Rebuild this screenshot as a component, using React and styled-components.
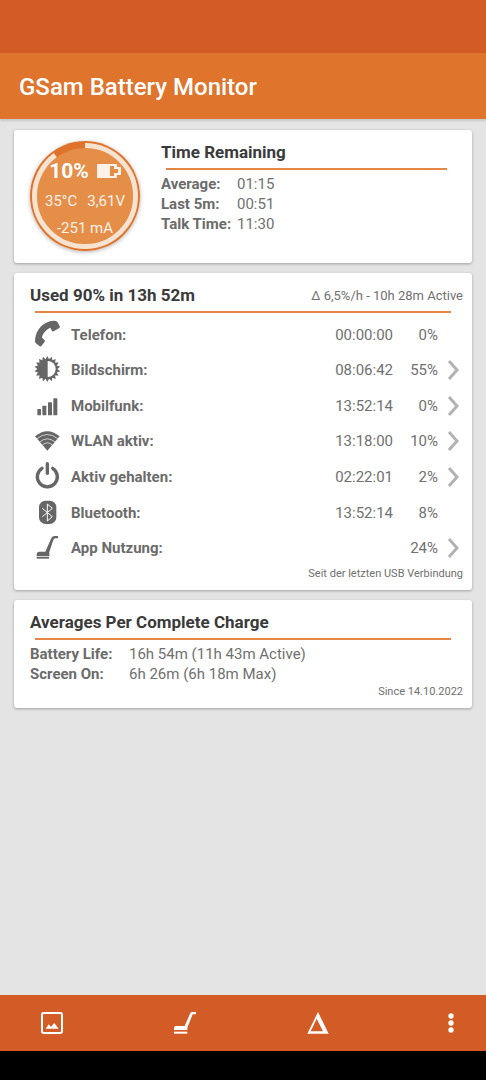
import React from "react";
import styled, { createGlobalStyle } from "styled-components";

const PhoneIcon = () => (
  <Icon viewBox="0 0 84 84">
    <path d="M51 1C24 8 7 32 6 60Q6 65 9 67L20 76Q23 77 25 75L35 62Q37 59 34 56L27 50C28 38 40 25 52 20L57 30Q59 32 62 31L79 21Q82 19 80 16L74 4Q72 1 68 0Q60-2 51 1Z" />
  </Icon>
);

const teeth = Array.from({ length: 36 }, (_, i) => {
  const r = i % 2 ? 30 : 39;
  const a = (i * Math.PI) / 18;
  return `${(43 + r * Math.sin(a)).toFixed(1)},${(39 - r * Math.cos(a)).toFixed(1)}`;
}).join(" ");

const ScreenIcon = () => (
  <Icon viewBox="0 0 84 84">
    <polygon points={teeth} />
    <path d="M44 15a24 24 0 0 1 0 48z" fill="#fff" />
  </Icon>
);

const SignalIcon = () => (
  <Icon viewBox="0 0 84 84">
    <rect x="13" y="51" width="11" height="19" rx="2" />
    <rect x="28" y="41" width="12" height="29" rx="2" />
    <rect x="45" y="31" width="12" height="39" rx="2" />
    <rect x="61" y="19" width="12" height="51" rx="2" />
  </Icon>
);

const WifiIcon = () => (
  <Icon viewBox="0 0 84 84">
    <path d="M6 28Q43-3 80 28L43 71Z" />
    <g fill="none" stroke="#fff" strokeWidth="2">
      <path d="M12 35Q43 10 74 35" />
      <path d="M20 45Q43 26 66 45" />
      <path d="M28 54Q43 41 58 54" />
    </g>
  </Icon>
);

const PowerIcon = () => (
  <Icon viewBox="0 0 84 84">
    <g fill="none" stroke="#666" strokeWidth="10" strokeLinecap="round">
      <path d="M27 16A30 30 0 1 0 59 16" />
      <path d="M43 2V31" />
    </g>
  </Icon>
);

const BluetoothIcon = () => (
  <Icon viewBox="0 0 84 84">
    <rect x="18" y="5" width="52" height="70" rx="20" />
    <path
      d="M28 28L58 53L43 66V15L58 28L28 53"
      fill="none"
      stroke="#fff"
      strokeWidth="3"
    />
  </Icon>
);

const SweepIcon = () => (
  <Icon viewBox="0 0 84 84">
    <path d="M11 67V62Q11 53 20 53H37L54 14Q57 6 64 6H75V13H67Q63 13 61 18L49 54V67Z" />
    <rect x="11" y="69" width="37" height="5" />
  </Icon>
);

const usage = [
  { name: "Telefon", time: "00:00:00", percent: "0%", icon: PhoneIcon },
  { name: "Bildschirm", time: "08:06:42", percent: "55%", icon: ScreenIcon, more: true },
  { name: "Mobilfunk", time: "13:52:14", percent: "0%", icon: SignalIcon, more: true },
  { name: "WLAN aktiv", time: "13:18:00", percent: "10%", icon: WifiIcon, more: true },
  { name: "Aktiv gehalten", time: "02:22:01", percent: "2%", icon: PowerIcon, more: true },
  { name: "Bluetooth", time: "13:52:14", percent: "8%", icon: BluetoothIcon },
  { name: "App Nutzung", time: "", percent: "24%", icon: SweepIcon, more: true },
];

const remaining = [
  ["Average:", "01:15"],
  ["Last 5m:", "00:51"],
  ["Talk Time:", "11:30"],
];

const averages = [
  ["Battery Life:", "16h 54m (11h 43m Active)"],
  ["Screen On:", "6h 26m (6h 18m Max)"],
];

const Facts = ({ rows, labelWidth }) => (
  <FactTable $label={labelWidth}>
    <tbody>
      {rows.map(([label, value]) => (
        <tr key={label}>
          <th scope="row">{label}</th>
          <td>{value}</td>
        </tr>
      ))}
    </tbody>
  </FactTable>
);

const BatteryGauge = () => (
  <Gauge>
    <svg viewBox="0 0 110 110" aria-hidden="true">
      <circle cx="55" cy="55" r="55" fill="#df732b" />
      <circle cx="55" cy="55" r="48" fill="#e48e47" />
      {/* the charge already used, clockwise from the top */}
      <circle
        cx="55"
        cy="55"
        r="50.5"
        fill="none"
        stroke="#f8e3d1"
        strokeWidth="5"
        pathLength="100"
        strokeDasharray="90 10"
        transform="rotate(-90 55 55)"
      />
    </svg>
    <Reading>
      <GaugeLine $gap="8px">
        <Level>10%</Level>
        <svg width="24" height="14" viewBox="0 0 24 14" aria-hidden="true">
          <path d="M0 1Q0 0 1 0H20V3H24V11H20V14H1Q0 14 0 13Z" fill="#fdf1e8" />
          <path d="M13 2H17V5H21V9H17V12H13Z" fill="#e48e47" />
        </svg>
      </GaugeLine>
      <GaugeLine $gap="10px">
        <span>35°C</span>
        <span>3,61V</span>
      </GaugeLine>
      <GaugeLine>-251 mA</GaugeLine>
    </Reading>
  </Gauge>
);

const App = () => {
  return (
    <>
      <GlobalStyle />
      <Screen>
        <StatusBar />
        <AppBar>
          <h1>GSam Battery Monitor</h1>
        </AppBar>
        <Content>
          <Card>
            <Summary>
              <BatteryGauge />
              <SummaryText>
                <CardTitle>Time Remaining</CardTitle>
                <Rule $right="16px" />
                <Facts rows={remaining} labelWidth="76px" />
              </SummaryText>
            </Summary>
          </Card>

          <Card>
            <CardHead>
              <CardTitle>Used 90% in 13h 52m</CardTitle>
              <Rate>Δ 6,5%/h - 10h 28m Active</Rate>
            </CardHead>
            <Rule $right="12px" />
            <UsageTable>
              <tbody>
                {usage.map(({ name, time, percent, icon: RowIcon, more }) => (
                  <tr key={name}>
                    <IconCell>
                      <RowIcon />
                    </IconCell>
                    <th scope="row">{name}:</th>
                    <TimeCell>{time}</TimeCell>
                    <PercentCell>{percent}</PercentCell>
                    <MoreCell>
                      {more && (
                        <MoreButton type="button" aria-label={name}>
                          <svg width="12" height="22" viewBox="0 0 12 22">
                            <path d="M2 2L10 11L2 20" />
                          </svg>
                        </MoreButton>
                      )}
                    </MoreCell>
                  </tr>
                ))}
              </tbody>
            </UsageTable>
            <Footnote>Seit der letzten USB Verbindung</Footnote>
          </Card>

          <Card>
            <CardTitle>Averages Per Complete Charge</CardTitle>
            <Rule $right="12px" />
            <Facts rows={averages} labelWidth="99px" />
            <Footnote>Since 14.10.2022</Footnote>
          </Card>
        </Content>

        <BottomBar>
          <BarButton type="button" aria-label="Chart">
            <svg width="22" height="22" viewBox="0 0 66 66">
              <rect x="3" y="3" width="60" height="60" rx="5" fill="none" stroke="#fff" strokeWidth="6" />
              <path d="M14 50L23 37L30 44L40 33L53 50Z" fill="#fff" />
            </svg>
          </BarButton>
          <BarButton type="button" aria-label="App usage">
            <svg width="22" height="22" viewBox="0 0 66 66">
              <path d="M0 54V48Q0 42 6 42H32L49 3Q51 0 54 0H66V7H56L40 47V54Z" fill="#fff" />
              <rect y="59" width="40" height="6" fill="#fff" />
            </svg>
          </BarButton>
          <BarButton type="button" aria-label="Delta">
            <svg width="22" height="22" viewBox="0 0 66 66">
              <path d="M33 0L65 65H1ZM29 20L11 58H48Z" fill="#fff" fillRule="evenodd" />
            </svg>
          </BarButton>
          <BarButton type="button" aria-label="Menu">
            <svg width="22" height="22" viewBox="0 0 66 66" fill="#fff">
              <circle cx="33" cy="12" r="8" />
              <circle cx="33" cy="33" r="8" />
              <circle cx="33" cy="54" r="8" />
            </svg>
          </BarButton>
        </BottomBar>
        <NavArea />
      </Screen>
    </>
  );
};

export default App;

const GlobalStyle = createGlobalStyle`
  * {
    box-sizing: border-box;
  }
  body {
    margin: 0;
    background: #e4e4e4;
    color: #707070;
    font-family: Roboto, "Liberation Sans", sans-serif;
    font-size: 15px;
  }
  h1, h2, p {
    margin: 0;
  }
  table {
    border-collapse: collapse;
  }
  th, td {
    padding: 0;
    text-align: left;
  }
  th {
    color: #6b6b6b;
  }
  button {
    border: 0;
    padding: 0;
    background: none;
    cursor: pointer;
  }
`;

const Screen = styled.div`
  display: flex;
  flex-direction: column;
  min-height: 100vh;
`;

const StatusBar = styled.div`
  height: 53px;
  background: #d35b26;
`;

const AppBar = styled.header`
  display: flex;
  align-items: center;
  height: 66px;
  padding: 2px 19px 0;
  background: #df742c;
  box-shadow: 0 2px 2px rgba(0, 0, 0, 0.12);

  h1 {
    color: #fff;
    font-size: 24px;
    font-weight: 500;
  }
`;

const Content = styled.main`
  flex: 1;
  display: flex;
  flex-direction: column;
  gap: 10px;
  padding: 11px 14px 10px;
`;

const Card = styled.section`
  padding: 11px 9px 8px 16px;
  border-radius: 3px;
  background: #fff;
  box-shadow: 0 1px 3px rgba(0, 0, 0, 0.3);
`;

const CardHead = styled.div`
  display: flex;
  justify-content: space-between;
  align-items: center;
`;

const CardTitle = styled.h2`
  color: #3a3a3a;
  font-size: 17px;
  font-weight: 700;
  line-height: 22px;
`;

const Rate = styled.span`
  padding-top: 2px;
  font-size: 13px;
  line-height: 20px;
`;

const Rule = styled.div`
  height: 2px;
  margin: 5px ${(props) => props.$right} 4px 5px;
  background: #e58644;
`;

const Summary = styled.div`
  display: flex;
  gap: 21px;
`;

const SummaryText = styled.div`
  flex: 1;
`;

const Gauge = styled.div`
  position: relative;
  flex: none;
  width: 110px;
  height: 110px;
  margin-bottom: 4px;
  border-radius: 50%;
  box-shadow: 0 1px 4px rgba(0, 0, 0, 0.3);
`;

const Reading = styled.div`
  position: absolute;
  inset: 0;
  display: flex;
  flex-direction: column;
  align-items: center;
  padding-top: 14px;
  color: #fdf1e8;
`;

const GaugeLine = styled.div`
  display: flex;
  align-items: center;
  gap: ${(props) => props.$gap || "0"};
  height: 27px;

  &:first-child {
    height: 32px;
  }
`;

const Level = styled.strong`
  color: #fff;
  font-size: 21px;
`;

const FactTable = styled.table`
  line-height: 20px;

  th {
    width: ${(props) => props.$label};
    white-space: nowrap;
  }
`;

const UsageTable = styled.table`
  width: 100%;
  height: 249px;
`;

const IconCell = styled.td`
  width: 41px;
  padding-left: 3px;
`;

const Icon = styled.svg`
  display: block;
  width: 28px;
  height: 28px;
  overflow: visible;
  fill: #666;
`;

const TimeCell = styled.td`
  text-align: right;
`;

const PercentCell = styled.td`
  width: 45px;
  text-align: right;
`;

const MoreCell = styled.td`
  width: 25px;
  padding-left: 9px;
`;

const MoreButton = styled.button`
  display: block;

  svg {
    display: block;
    fill: none;
    stroke: #b2b2b2;
    stroke-width: 3px;
  }
`;

const Footnote = styled.p`
  font-size: 11px;
  line-height: 16px;
  text-align: right;
`;

const BottomBar = styled.nav`
  display: flex;
  justify-content: space-between;
  align-items: center;
  height: 56px;
  padding: 0 11px 0 28px;
  background: #d35b26;
`;

const BarButton = styled.button`
  display: flex;
  justify-content: center;
  align-items: center;
  width: 48px;
  height: 48px;
`;

const NavArea = styled.div`
  height: 29px;
  background: #000;
`;
